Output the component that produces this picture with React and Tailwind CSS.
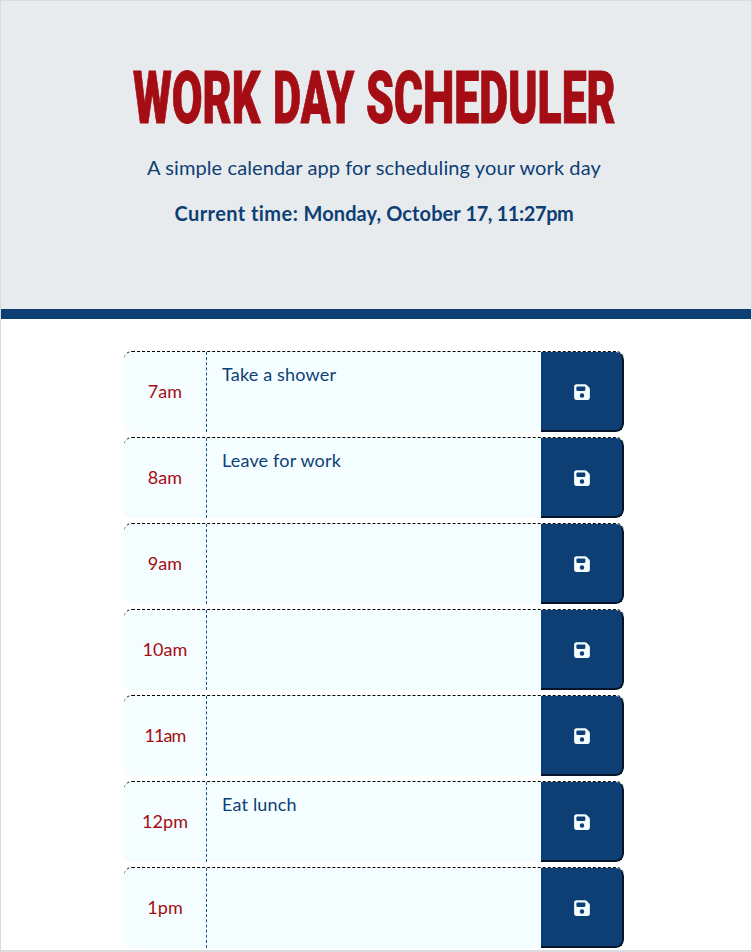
import { FaFloppyDisk } from "react-icons/fa6";

const rows = [
  ["7am", "Take a shower"],
  ["8am", "Leave for work"],
  ["9am", ""],
  ["10am", ""],
  ["11am", ""],
  ["12pm", "Eat lunch"],
  ["1pm", ""],
];

function Word({ children, box, scale }) {
  return (
    <span className={`block ${box}`}>
      <span className={`inline-block origin-left whitespace-nowrap ${scale}`}>{children}</span>
    </span>
  );
}

function TimeBlock({ hour, task }) {
  return (
    <div className="flex h-[81px] w-[500px] overflow-hidden rounded-lg border-t border-dashed border-black bg-[#f4fdff]">
      <div className="flex w-[83px] shrink-0 items-center justify-center border-r border-dashed border-r-[#1a4f8a] pb-[2px] text-lg text-[#a50d14]">
        <span className={hour === "11am" ? "tracking-[-0.9px]" : "tracking-[0.1px]"}>{hour}</span>
      </div>
      <div className="w-[334px] shrink-0 px-[15px] pt-[9px] text-lg leading-[27px] tracking-[0.18px] text-[#0d3f75]">
        <span>{task}</span>
      </div>
      <button
        aria-label="Save"
        className="flex w-[83px] shrink-0 items-center justify-center rounded-r-lg border-r-2 border-b-2 border-solid border-[#04142b] bg-[#0d3f75] pt-[2px] pl-px text-[#f4fdff]"
      >
        <FaFloppyDisk className="size-[18px]" />
      </button>
    </div>
  );
}

export default function App() {
  return (
    <div className="h-[952px] w-[752px] overflow-hidden border border-b-2 border-[#d9dcde] bg-white font-['Lato','Liberation_Sans',sans-serif]">
      <header className="flex h-[318px] flex-col items-center border-b-10 border-[#0d3f75] bg-[#e8ebee] pr-1 text-[#0d3f75]">
        <h1 className="mt-[62px] flex h-[72px] w-[482px] font-['Roboto',sans-serif] text-[72px] leading-[72px] font-black text-[#a50d14] [-webkit-text-stroke:1px_#a50d14]">
          <Word box="w-[140px]" scale="scale-x-[0.62]">WORK</Word>
          <Word box="w-[93px]" scale="scale-x-[0.603]">DAY</Word>
          <Word box="w-[249px]" scale="scale-x-[0.618]">SCHEDULER</Word>
        </h1>
        <p className="mt-[17px] text-xl leading-[30px] font-normal tracking-[0.1px]">A simple calendar app for scheduling your work day</p>
        <p className="mt-4 text-xl leading-[30px] font-bold">
          <span className="tracking-[0.42px]">Current time: </span>
          <span className="tracking-[0.1px]">Monday, October </span>
          <span className="tracking-[-0.4px]">17, 11:27pm</span>
        </p>
      </header>
      <main className="flex flex-col items-center gap-[5px] pt-8 pr-1">
        {rows.map(([hour, task]) => (
          <TimeBlock key={hour} hour={hour} task={task} />
        ))}
      </main>
    </div>
  );
}
